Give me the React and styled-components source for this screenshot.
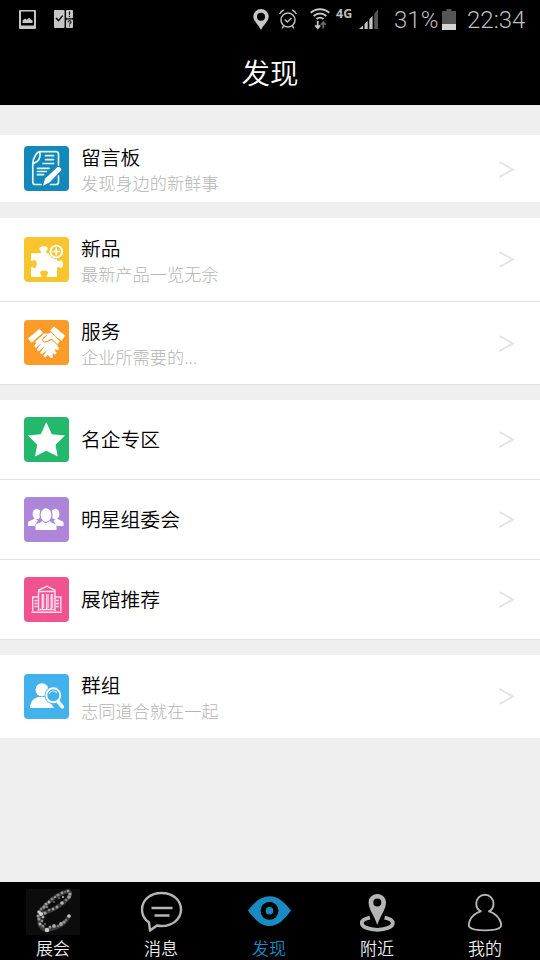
import styled, { createGlobalStyle } from 'styled-components'

/*---> Icons: status bar <---*/
const PictureIcon = () => (
  <svg width="17" height="19" viewBox="0 0 17 19">
    <path fill="#c6c6c6" fillRule="evenodd" d="M1 0h15a1 1 0 0 1 1 1v17a1 1 0 0 1-1 1H1a1 1 0 0 1-1-1V1a1 1 0 0 1 1-1zM2 1.6v13.9h13V1.6z" />
    <path fill="#c6c6c6" d="M3.500 13v-2.500L6 8.400l1.800 1.300 2.300-2 1.600 1.800 1.800.8V13z" />
  </svg>
)

const TasksIcon = () => (
  <svg width="19" height="18" viewBox="0 0 19 18">
    <rect width="10.6" height="18" rx="1" fill="#c6c6c6" />
    <rect x="12" width="7" height="8.3" rx="1" fill="#c6c6c6" />
    <rect x="12" y="9.6" width="7" height="8.4" rx="1" fill="#c6c6c6" />
    <path d="M2 8l2.500 2.600L8.600 5.600" fill="none" stroke="#000" strokeWidth="1.400" />
    <path d="M15.500 1.500v3.400M15.500 5.800v1.300M14 12.200c0-2 3-1.700 3 0 0 1-1.500 1-1.500 2.400M15.500 15.400v1.200" fill="none" stroke="#000" strokeWidth="1.100" />
  </svg>
)

const PinIcon = () => (
  <svg width="16" height="21" viewBox="0 0 16 21">
    <path fill="#c6c6c6" fillRule="evenodd" d="M8 0a7.700 7.700 0 0 1 7.700 7.600C15.700 12 11 15.500 8 21 5 15.500.3 12 .3 7.600A7.700 7.700 0 0 1 8 0zm0 3.800a4 4 0 1 0 0 8 4 4 0 0 0 0-8z" />
  </svg>
)

const AlarmIcon = () => (
  <svg width="18" height="20" viewBox="0 0 18 20" fill="none" stroke="#bdbdbd" strokeWidth="1.500">
    <circle cx="9" cy="11" r="7" />
    <path d="M5.800 10.500l2.500 2.500 4.200-4M.7 5a8 8 0 0 1 4-4M17.300 5a8 8 0 0 0-4-4M4.500 17l-1.300 2.500M13.500 17l1.300 2.500" />
  </svg>
)

const WifiIcon = () => (
  <svg width="20" height="22" viewBox="0 0 20 22" fill="none" stroke="#c6c6c6">
    <path strokeWidth="2" d="M.7 4.800c5.200-4.800 13.400-4.800 18.600 0M3.600 8c3.600-3.300 9.200-3.300 12.800 0M6.500 11c2-1.800 5-1.800 7 0" />
    <path strokeWidth="1.800" d="M7.700 13v7M5.200 17.300l2.500 2.800 2.500-2.800" />
    <path stroke="#666" strokeWidth="1.800" d="M13.300 20.500v-6M10.800 16.800l2.500-2.800 2.500 2.800" />
  </svg>
)

const SignalIcon = () => (
  <svg width="20" height="20" viewBox="0 0 20 20" fill="#c6c6c6">
    <path d="M0 20l4-3.500V20zM5.500 15l3.200-3.200V20H5.500zM10.300 10.500l3.300-3.700V20h-3.300z" />
    <path fill="#555" d="M15.200 5L19 0v20h-3.800z" />
  </svg>
)

const BatteryIcon = () => (
  <svg width="14" height="21" viewBox="0 0 14 21">
    <path fill="#555" d="M4.500 0h5v2H14v13H0V2h4.500z" />
    <rect y="15" width="14" height="6" fill="#d4d4d4" />
  </svg>
)

/*---> Icons: menu tiles <---*/
const NoteIcon = () => (
  <svg viewBox="0 0 45 45" fill="none" stroke="#e8f7fc" strokeWidth="1.700" strokeLinecap="round" strokeLinejoin="round">
    <path d="M34.500 19V8c0-1.500-.8-2.300-2.300-2.300H16C13 5.700 9 12 8.800 17v19c0 1.700.7 2.500 2.500 2.500H17M34.500 30v6c0 1.600-.8 2.500-2.500 2.500h-5.500" />
    <path d="M15.500 5.900c1.400 2.500.2 7.200-2 9.300-1.500 1.300-3.500 1.500-4.500 2.500" />
    <path d="M21.500 9.700h8M21.500 13.600h8M19 17.500h10.500M13.500 22.300H25M13.500 25.500h8.800M13.500 28.700h6" />
    <path fill="#fff" stroke="none" d="M33.300 21.300c1.500-1.500 5 1.400 3.700 3.200L25.500 36.500l-6.500 3.200 2-7z" />
  </svg>
)

const PuzzleIcon = () => (
  <svg viewBox="0 0 45 45">
    <path fill="#fff" d="M7 16.200h9.200c1.300-.3 1.200-1.200.1-2.400-2.200-2.600-.4-4.500 3.400-4.500s5.200 1.900 3 4.500c-1.100 1.200-.6 2.100.8 2.400h9.500v7c.4 1.500 1.500 1.300 2.400.5 1.700-1.400 3.600 0 3.600 3.300s-1.900 5-3.600 3.500c-.9-.8-2-.7-2.400.6V40h-9.300c-1.500-.3-1.300-1.500-.3-2.500 1.700-1.900 0-4-3.300-4s-5 2.100-3.300 4c1 1 1.200 2.200-.3 2.500H7v-9.500c.3-1.200 1.300-.7 2.200.1 1.700 1.500 3.500-.2 3.500-3.500s-1.800-5-3.500-3.500c-.9.800-1.900.5-2.200-.7z" />
    <circle cx="32.300" cy="14.500" r="7.600" fill="#f8c52e" />
    <circle cx="32.300" cy="14.500" r="6.800" fill="#fff" />
    <circle cx="32.300" cy="14.500" r="4.900" fill="#f8c52e" />
    <path d="M32.300 10.500v8M28.300 14.500h8" stroke="#fff" strokeWidth="1.700" />
  </svg>
)

const HandshakeIcon = () => (
  <svg viewBox="0 0 45 45" strokeLinecap="round" strokeLinejoin="round">
    <path fill="#fff" d="M4 18.500L15.500 8.800l3.500 4L7.500 22.800zM26 10.500l4-4L41 15.500 37.500 21z" />
    <path fill="#fff" d="M11 21.500l8.500-7.700 5-.3 4.500-2 7 9.200-2.800 4.300-5.700-6.200-4 2.300c-3.300 1.500-5.500-.7-3.300-3.200l2.300-2.500-2.200 1-7.500 7.200z" />
    <path fill="#fff" d="M11.200 21.600l2 4.500L27 37.500l6.800-12.300-6-5.500-4.500 2.200-4-.5 1-4z" />
    <path fill="none" stroke="#fff" strokeWidth="3" d="M13.500 24l-1.500 2M16.500 27l-2 2.500M20 30l-2.300 2.700M23 33.500l-2 2.200M27.500 36.500l-2-2M31 33l-3-3M33.500 28.500L30 25.500" />
    <path fill="none" stroke="#fb9b28" strokeWidth="1" d="M18 14.800l-7 6.500M27 11.800l8.500 8.700M22.500 15.500l-4 4c-.8 2 2 3.300 4.500 2l4.500-2.300 6 5.500M13.500 27.500l2.500-3M16.500 31l3-3.500M20 34l2.500-3" />
  </svg>
)

const StarIcon = () => (
  <svg viewBox="0 0 45 45">
    <path fill="#fff" d="M22.300 5l5.500 12.300 13.200 1.200-9.500 9.300L33.700 39.500l-11.400-5.800L11 39.500l2.200-11.700L4 18.500l12.800-1.200z" />
  </svg>
)

const TeamIcon = () => (
  <svg viewBox="0 0 45 45" fill="#fff">
    <ellipse cx="12.800" cy="17" rx="4.200" ry="5.300" />
    <ellipse cx="31.200" cy="17" rx="4.200" ry="5.300" />
    <path d="M4 29v-3.200c0-2.200 4-1.800 6.500-4.500l3.500 2.500-3.500 5.200zM39.500 29v-3.200c0-2.200-4-1.800-6.500-4.500l-3.500 2.500L33 29z" />
    <path d="M17.500 22h9l-1 5h-7z" />
    <ellipse cx="22" cy="18" rx="6" ry="7.300" stroke="#ad86da" strokeWidth="1.200" />
    <path d="M11.500 33v-4c0-3 4.500-2.300 7-5l3.500 3.500 3.500-3.500c2.500 2.700 7 2 7 5v4z" />
  </svg>
)

const MuseumIcon = () => (
  <svg viewBox="0 0 45 45" fill="none" stroke="#ffe1ee" strokeWidth="1.400">
    <path d="M14.500 13.800V34M31 13.800V34M14.500 14.500H31M14 13.500L22.800 9.200 31.500 13.500M18.300 17v15M22.700 17v15M27.200 17v15" />
    <path d="M14.500 20H8.700v14M31 20h5.800v14M10.500 23.500h3M10.500 26.500h3M10.500 29.500h3M32 23.500h3M32 26.500h3M32 29.500h3M15.500 32.500H30M7.500 35.200H37.800" />
    <path strokeWidth="1" d="M19.700 17v14M24.200 17v14M28.700 17v14" />
  </svg>
)

const SearchUserIcon = () => (
  <svg viewBox="0 0 45 45">
    <path fill="#fff" d="M6 34c.3-6.500 3.200-10 9-11h7.500l7.500 11z" />
    <ellipse cx="18" cy="15.800" rx="6.500" ry="6.500" fill="#fff" />
    <circle cx="29.300" cy="21.300" r="8.700" fill="#41b2ec" />
    <path d="M34 27.500l4.300 5.300" stroke="#fff" strokeWidth="3.600" strokeLinecap="round" />
    <circle cx="29.300" cy="21.300" r="7" fill="#41b2ec" stroke="#fff" strokeWidth="1.900" />
    <path d="M25 20a4.500 4.500 0 0 1 8-1" fill="none" stroke="#d9f1fc" strokeWidth="1.100" />
  </svg>
)

const ChevronIcon = () => (
  <svg width="16" height="18" viewBox="0 0 16 18" fill="none" stroke="#e6e6e6" strokeWidth="2">
    <path d="M.3 2L14 9.500.3 17" />
  </svg>
)

/*---> Icons: tab bar <---*/
// x, y, radius and brightness of every speck in the glittering letter
const specks = [
  [42, 2, 1.4, 150], [39, 3, 1, 120], [36, 4, 1.4, 150], [32, 6, 1.6, 140],
  [29, 8, 1, 170], [26, 10, 1.5, 130], [23, 13, 1.5, 180], [20, 15, 1.6, 150],
  [18, 18, 1.7, 150], [15, 20, 1.4, 130], [13, 23, 1.8, 190], [15, 25, 2.1, 210],
  [12, 27, 1.6, 150], [17, 28, 1.5, 170], [13, 30, 1.6, 150], [16, 32, 1.4, 140],
  [14, 35, 1.5, 180], [17, 37, 1.6, 140], [21, 41, 2.3, 200],
  [24, 38, 1.5, 150], [28, 37, 1.9, 170], [32, 37, 1.3, 130],
  [35, 35, 1.9, 170], [38, 33, 1.6, 150], [40, 31, 1.2, 120], [43, 27, 1.8, 200],
  [44, 5, 1.6, 160], [43, 8, 1.8, 160], [40, 11, 1.3, 130],
  [36, 14, 1.8, 180], [31, 18, 1.5, 150], [27, 20, 1.3, 160],
  [23, 21, 1.3, 140], [19, 24, 1.6, 160], [37, 8, 1.2, 150],
  [33, 9, 1, 110], [28, 13, 1, 110], [21, 18, 1.2, 120], [19, 35, 1, 110],
]

const SparkIcon = () => (
  <svg width="54" height="46" viewBox="0 0 54 46">
    <rect width="54" height="46" fill="#0c0c0c" />
    <path d="M15 25C27 22 45 11 44 4 43 0 32 5 24 12 10 23 10 40 21 41c8-1 18-5 22-14" fill="none" stroke="#3a3a3a" strokeWidth="4" />
    {specks.map(([x, y, r, v]) => (
      <circle key={`${x}-${y}`} cx={x} cy={y} r={r} fill={`rgb(${v}, ${v}, ${v})`} />
    ))}
  </svg>
)

const ChatIcon = () => (
  <svg width="54" height="46" viewBox="0 0 54 46" fill="none" stroke="#b5b5b5" strokeWidth="2.400" strokeLinejoin="round">
    <path d="M15 33.500C10.500 30.500 8 26 8 20.500 8 11 16.500 4 27.500 4S47 11 47 20.500 38.500 37 27.500 37c-1.500 0-3-.2-4.500-.5L16 41.500z" />
    <path d="M17.500 19h21M20.500 26.500h15" />
  </svg>
)

const EyeIcon = () => (
  <svg width="54" height="46" viewBox="0 0 54 46">
    <path fill="#1a8bc2" d="M6 21.500C12.500 13 19 7.200 27.500 7.200S42.500 13 49 21.500C42.500 30.500 36 37 27.500 37S12.500 30.500 6 21.500z" />
    <circle cx="27.500" cy="21.800" r="9" fill="#000" />
    <circle cx="27.500" cy="21.800" r="3.800" fill="#1a8bc2" />
  </svg>
)

const NearbyIcon = () => (
  <svg width="54" height="46" viewBox="0 0 54 46">
    <path fill="none" stroke="#b5b5b5" strokeWidth="3.800" d="M20 28.700c-4.800.9-8.200 2.900-8.200 5.500 0 3.500 6.500 6.600 15.500 6.600s15.500-3.100 15.500-6.600c0-2.600-3.400-4.600-8.200-5.500" />
    <path fill="#b5b5b5" fillRule="evenodd" d="M27.300 5c5 0 8.700 3.600 8.700 8.500 0 7-5.500 12.500-8.700 22.500-3.200-10-8.700-15.500-8.700-22.500 0-4.900 3.700-8.500 8.700-8.500zm0 4.500a4 4 0 1 0 0 8 4 4 0 0 0 0-8z" />
  </svg>
)

const ProfileIcon = () => (
  <svg width="54" height="46" viewBox="0 0 54 46" fill="none" stroke="#b5b5b5" strokeWidth="1.900" strokeLinejoin="round">
    <path d="M22.800 22.300C11 26 10 36 11.500 38c1.500 2 8 3.400 15.500 3.400S41 40 42.500 38C44 36 42.500 26 31 22.300c3-1.500 4.500-4.300 4.500-7.600 0-5-3.700-8.900-8.600-8.900s-8.600 3.900-8.600 8.900c0 3.300 1.500 6.100 4.500 7.600z" />
  </svg>
)

/*---> Data <---*/
const sections = [
  [{ title: '留言板', note: '发现身边的新鲜事', color: '#1389ba', icon: NoteIcon, height: 67 }],
  [
    { title: '新品', note: '最新产品一览无余', color: '#f8c52e', icon: PuzzleIcon, height: 82.6 },
    { title: '服务', note: '企业所需要的...', color: '#fb9b28', icon: HandshakeIcon, height: 82.4 },
  ],
  [
    { title: '名企专区', color: '#23b86c', icon: StarIcon, height: 79 },
    { title: '明星组委会', color: '#ad86da', icon: TeamIcon, height: 79 },
    { title: '展馆推荐', color: '#f0538f', icon: MuseumIcon, height: 79 },
  ],
  [{ title: '群组', note: '志同道合就在一起', color: '#41b2ec', icon: SearchUserIcon, height: 83 }],
]

const tabs = [
  { label: '展会', icon: SparkIcon },
  { label: '消息', icon: ChatIcon },
  { label: '发现', icon: EyeIcon, active: true },
  { label: '附近', icon: NearbyIcon },
  { label: '我的', icon: ProfileIcon },
]

/*---> Component <---*/
const App = () => (
  <>
    <GlobalStyle />
    <Screen>
      <StatusBar>
        <Notifications>
          <PictureIcon />
          <TasksIcon />
        </Notifications>
        <Indicators>
          <PinIcon />
          <AlarmIcon />
          <WifiIcon />
          <Network>4G</Network>
          <SignalIcon />
          <Percent>31%</Percent>
          <BatteryIcon />
          <Clock>22:34</Clock>
        </Indicators>
      </StatusBar>
      <Header>发现</Header>
      <Content>
        {sections.map((rows) => (
          <Section key={rows[0].title} $lined={rows.length > 1}>
            {rows.map(({ title, note, color, icon: Icon, height }) => (
              <Row key={title} $height={height}>
                <Tile $color={color}><Icon /></Tile>
                <Texts $double={Boolean(note)}>
                  <Title>{title}</Title>
                  {note && <Note>{note}</Note>}
                </Texts>
                <ChevronIcon />
              </Row>
            ))}
          </Section>
        ))}
      </Content>
      <TabBar>
        {tabs.map(({ label, icon: Icon, active }) => (
          <Tab key={label} $active={active}>
            <Icon />
            <TabLabel>{label}</TabLabel>
          </Tab>
        ))}
      </TabBar>
    </Screen>
  </>
)

export default App

/*---> Styles <---*/
const GlobalStyle = createGlobalStyle`
  * {
    box-sizing: border-box;
  }

  body {
    margin: 0;
    font-family: 'Noto Sans CJK SC', sans-serif;
  }

  svg {
    display: block;
    flex-shrink: 0;
  }
`

const Screen = styled.div`
  width: 540px;
  height: 960px;
  display: flex;
  flex-direction: column;
  background: #efefef;
  overflow: hidden;
`

const StatusBar = styled.div`
  height: 38px;
  padding: 0 15px 0 19px;
  display: flex;
  align-items: center;
  justify-content: space-between;
  background: #000;
`

const Notifications = styled.div`
  display: flex;
  align-items: center;
  gap: 18px;
`

const Indicators = styled.div`
  display: flex;
  align-items: center;
  color: #bfbfbf;
  font-family: Roboto, sans-serif;
  font-size: 24px;
  font-weight: 300;
  line-height: 38px;

  svg:nth-of-type(2) {
    margin-left: 10px;
  }

  svg:nth-of-type(3) {
    margin-left: 13px;
  }
`

const Network = styled.span`
  width: 17px;
  margin: 0 6px 11px 6px;
  font-family: 'Noto Sans', sans-serif;
  font-size: 12.5px;
  font-weight: 700;
  line-height: 14px;
`

const Percent = styled.span`
  width: 44px;
  margin: 2px 4px 0 15px;
`

const Clock = styled.span`
  width: 58px;
  margin: 2px 0 0 11px;
`

const Header = styled.header`
  height: 67px;
  display: flex;
  align-items: center;
  justify-content: center;
  background: #000;
  color: #fff;
  font-size: 28.5px;
  font-weight: 350;
  line-height: 40px;
`

const Content = styled.main`
  flex: 1;
  padding-top: 30px;
`

const Section = styled.section`
  margin-bottom: ${(props) => (props.$lined ? 15 : 16)}px;
  border-bottom: ${(props) => (props.$lined ? '1px solid #e2e2e2' : 'none')};
  background: #fff;
`

const Row = styled.div`
  height: ${(props) => props.$height}px;
  box-sizing: content-box;
  display: flex;
  align-items: center;
  padding: 0 25px 0 24px;

  & + & {
    border-top: 1px solid #e2e2e2;
  }
`

const Tile = styled.div`
  width: 45px;
  height: 45px;
  border-radius: 4px;
  overflow: hidden;
  background: ${(props) => props.$color};
`

const Texts = styled.div`
  flex: 1;
  margin-left: 12px;
  padding-top: ${(props) => (props.$double ? 2.5 : 0)}px;
`

const Title = styled.div`
  color: #000;
  font-size: 19.8px;
  font-weight: 350;
  line-height: 26px;
`

const Note = styled.div`
  color: #b4b4b4;
  font-size: 17.2px;
  font-weight: 300;
  line-height: 26px;
`

const TabBar = styled.nav`
  height: 78px;
  display: flex;
  background: #000;
`

const Tab = styled.div`
  flex: 1;
  display: flex;
  flex-direction: column;
  align-items: center;
  padding: 7px 2px 0 0;
  color: ${(props) => (props.$active ? '#1a8bc2' : '#ececec')};
`

const TabLabel = styled.span`
  font-size: 17px;
  font-weight: 350;
  line-height: 25px;
`
